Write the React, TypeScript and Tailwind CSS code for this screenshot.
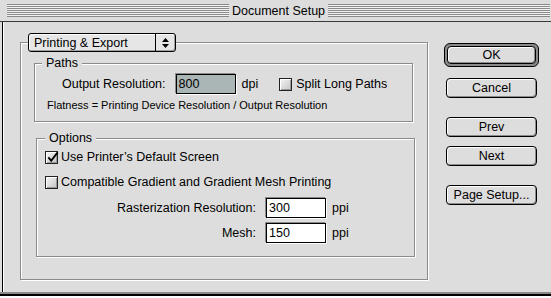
const font = "font-['Liberation_Sans',Arial,sans-serif]";
const etched =
  "border border-[#8a8a8a] shadow-[inset_1px_1px_0_#fff,1px_1px_0_#fff]";

function Stripes() {
  return (
    <div className="flex-1 h-[13px] bg-[repeating-linear-gradient(to_bottom,#8a8a8a_0px,#8a8a8a_1px,#f2f2f2_1px,#f2f2f2_2px)]" />
  );
}

function Check({ checked }: { checked?: boolean }) {
  return (
    <span className="relative flex w-[13px] h-[13px] shrink-0 border border-[#222] bg-[linear-gradient(135deg,#f6f6f6,#c4c4c4)] shadow-[inset_1px_1px_0_#fff,inset_-1px_-1px_0_#9a9a9a]">
      {checked && (
        <svg
          className="absolute left-[1px] top-[-1px]"
          width="12"
          height="12"
          viewBox="0 0 13 13"
        >
          <path d="M1.5 7 L4.5 10.5 L11.5 1.5" fill="none" stroke="#000" strokeWidth="2" />
        </svg>
      )}
    </span>
  );
}

function Field({ value, selected }: { value: string; selected?: boolean }) {
  return (
    <div
      className={`w-[60px] h-[20px] shrink-0 border border-black flex items-center pl-[2px] shadow-[-1px_-1px_0_#8a8a8a,1px_1px_0_#fff] ${
        selected ? "bg-[#aab6b6]" : "bg-white"
      }`}
    >
      {value}
    </div>
  );
}

function Btn({ label, className = "" }: { label: string; className?: string }) {
  return (
    <div
      className={`w-[91px] h-[20px] rounded-[4px] border border-black bg-[#dddddd] shadow-[inset_1px_1px_0_#fff,inset_-1px_-1px_0_#8c8c8c] flex items-center justify-center ${className}`}
    >
      {label}
    </div>
  );
}

export default function App() {
  return (
    <div
      className={`${font} w-[551px] h-[298px] overflow-hidden bg-[#dddddd] text-black text-[12.5px] leading-[14px]`}
    >
      {/* title bar */}
      <div className="h-[22px] flex items-center pl-[7px] pr-[1px] border-b border-[#3a3a3a]">
        <Stripes />
        <span className="px-[3px] leading-[14px]">Document Setup</span>
        <Stripes />
      </div>

      <div className="h-[270px] ml-[2px] flex border-l border-black shadow-[inset_1px_0_0_#fff]">
        {/* left: panels */}
        <fieldset className={`ml-[17px] mt-[11px] self-start w-[408px] pb-[22px] ${etched}`}>
          <legend className="ml-[7px]">
            <div className="flex w-[148px] h-[19px] rounded-[3px] border border-black bg-[#e6e6e6] shadow-[inset_1px_1px_0_#fff,inset_-1px_-1px_0_#a0a0a0]">
              <span className="flex-1 pl-[5px] flex items-center">Printing &amp; Export</span>
              <span className="w-[20px] border-l border-black flex items-center justify-center">
                <svg width="7" height="10" viewBox="0 0 7 10">
                  <path d="M3.5 0 L7 4 L0 4 Z M0 6 L7 6 L3.5 10 Z" fill="#000" />
                </svg>
              </span>
            </div>
          </legend>

          <fieldset className={`ml-[13px] mt-[4px] w-[379px] pb-[9px] ${etched}`}>
            <legend className="ml-[7px] px-[4px] bg-[#dddddd]">Paths</legend>
            <div className="mt-[4px] pl-[27px] flex items-center h-[20px]">
              <span>Output Resolution:</span>
              <div className="ml-[10px]">
                <Field value="800" selected />
              </div>
              <span className="ml-[6px]">dpi</span>
              <span className="ml-[21px]">
                <Check />
              </span>
              <span className="ml-[4px]">Split Long Paths</span>
            </div>
            <div className="mt-[5px] pl-[12px] text-[11px] leading-[13px]">
              Flatness = Printing Device Resolution / Output Resolution
            </div>
          </fieldset>

          <fieldset className={`ml-[15px] mt-[9px] w-[379px] pb-[13px] ${etched}`}>
            <legend className="ml-[8px] px-[4px] bg-[#dddddd]">Options</legend>
            <div className="mt-[4px] pl-[8px] h-[16px] flex items-center gap-[3px]">
              <Check checked />
              <span>Use Printer’s Default Screen</span>
            </div>
            <div className="mt-[9px] pl-[8px] h-[16px] flex items-center gap-[3px]">
              <Check />
              <span>Compatible Gradient and Gradient Mesh Printing</span>
            </div>
            <div className="mt-[8px] flex items-center h-[20px]">
              <span className="w-[219px] text-right">Rasterization Resolution:</span>
              <div className="ml-[10px]">
                <Field value="300" />
              </div>
              <span className="ml-[6px]">ppi</span>
            </div>
            <div className="mt-[5px] flex items-center h-[20px]">
              <span className="w-[219px] text-right">Mesh:</span>
              <div className="ml-[10px]">
                <Field value="150" />
              </div>
              <span className="ml-[6px]">ppi</span>
            </div>
          </fieldset>
        </fieldset>

        {/* right: buttons */}
        <div className="ml-[16px] mt-[21px] flex flex-col">
          <div className="w-[95px] h-[24px] rounded-[6px] border border-black bg-[#8a8a8a] p-[2px]">
            <div className="h-full rounded-[4px] border border-black bg-[#dddddd] shadow-[inset_1px_1px_0_#fff,inset_-1px_-1px_0_#8c8c8c] flex items-center justify-center">
              OK
            </div>
          </div>
          <Btn label="Cancel" className="ml-[2px] mt-[11px]" />
          <Btn label="Prev" className="ml-[2px] mt-[19px]" />
          <Btn label="Next" className="ml-[2px] mt-[9px]" />
          <Btn label="Page Setup..." className="ml-[2px] mt-[19px]" />
        </div>
      </div>

      <div className="h-[2px] bg-[#8a8a8a]" />
      <div className="h-[2px] bg-black" />
      <div className="h-[2px] bg-white" />
    </div>
  );
}
